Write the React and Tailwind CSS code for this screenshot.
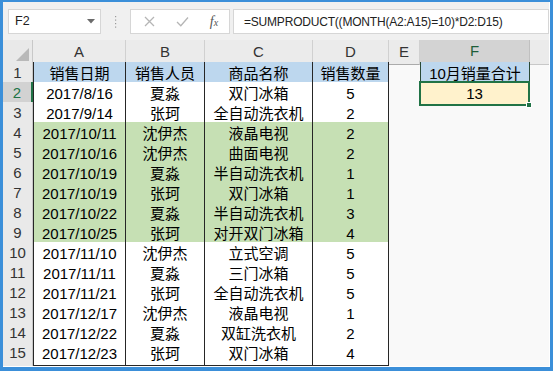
import React from "react";

const rows = [
  ["2017/8/16", "夏淼", "双门冰箱", "5", "w"],
  ["2017/9/14", "张珂", "全自动洗衣机", "2", "w"],
  ["2017/10/11", "沈伊杰", "液晶电视", "2", "g"],
  ["2017/10/16", "沈伊杰", "曲面电视", "2", "g"],
  ["2017/10/19", "夏淼", "半自动洗衣机", "1", "g"],
  ["2017/10/19", "张珂", "双门冰箱", "1", "g"],
  ["2017/10/22", "夏淼", "半自动洗衣机", "3", "g"],
  ["2017/10/25", "张珂", "对开双门冰箱", "4", "g"],
  ["2017/11/10", "沈伊杰", "立式空调", "5", "w"],
  ["2017/11/11", "夏淼", "三门冰箱", "5", "w"],
  ["2017/11/21", "张珂", "全自动洗衣机", "5", "w"],
  ["2017/12/17", "沈伊杰", "液晶电视", "1", "w"],
  ["2017/12/22", "夏淼", "双缸洗衣机", "2", "w"],
  ["2017/12/23", "张珂", "双门冰箱", "4", "w"],
];

const GRID = "grid grid-cols-[30px_93px_79px_108px_76px_31px_110px_1fr]";
const FONT = "font-['Liberation_Sans','Noto_Sans_CJK_SC',sans-serif]";

function RowNum({ n, active }) {
  return (
    <div
      className={
        "flex items-center justify-center text-[15px] border-b border-[#d4d4d4] " +
        (active
          ? "bg-[#d2d2d2] text-[#217346] border-r-2 border-r-[#217346]"
          : "bg-[#e9e9e9] text-[#333] border-r border-r-[#c8c8c8]")
      }
    >
      {n}
    </div>
  );
}

function DCell({ children, bg, first }) {
  return (
    <div
      className={
        "flex items-center justify-center text-[15px] text-black leading-none border-r border-b border-[#262626] " +
        bg +
        (first ? " border-l" : "")
      }
    >
      {children}
    </div>
  );
}

export default function App() {
  return (
    <div className={"w-[553px] h-[371px] bg-[#3b8fd9] pt-[2px] pl-[3px] pr-[3px] pb-[4px] " + FONT}>
      <div className="w-full h-full bg-[#f9f9f9] flex flex-col overflow-hidden border-r border-b border-white">
        {/* toolbar */}
        <div className="h-[38px] shrink-0 bg-[#f0f0f0] flex items-start pt-[7px]">
          <div className="ml-[5px] w-[93px] h-[25px] bg-white border border-[#d6d6d6] flex items-center justify-between pl-[6px] pr-[5px]">
            <span className="text-[12.5px] text-[#222] font-['Liberation_Sans',sans-serif]">F2</span>
            <svg width="8" height="5" viewBox="0 0 8 5">
              <path d="M0 0 L8 0 L4 4.5 Z" fill="#6b6b6b" />
            </svg>
          </div>
          <div className="w-[29px] h-[25px] flex items-center justify-center">
            <svg width="3" height="12" viewBox="0 0 3 12">
              <rect x="1" y="0" width="1.2" height="1.2" fill="#9a9a9a" />
              <rect x="1" y="3.5" width="1.2" height="1.2" fill="#9a9a9a" />
              <rect x="1" y="7" width="1.2" height="1.2" fill="#9a9a9a" />
              <rect x="1" y="10.5" width="1.2" height="1.2" fill="#9a9a9a" />
            </svg>
          </div>
          <div className="w-[100px] h-[25px] bg-white border border-[#d6d6d6] flex items-center">
            <div className="w-[34px] flex justify-center pl-[2px]">
              <svg width="11" height="11" viewBox="0 0 11 11">
                <path d="M1 1 L10 10 M10 1 L1 10" stroke="#b5b5b5" strokeWidth="1.3" />
              </svg>
            </div>
            <div className="w-[34px] flex justify-center">
              <svg width="13" height="11" viewBox="0 0 13 11">
                <path d="M1 6 L4.8 9.8 L12 1.5" stroke="#b5b5b5" strokeWidth="1.3" fill="none" />
              </svg>
            </div>
            <div className="w-[30px] flex justify-center">
              <span className="font-['Liberation_Serif',serif] italic text-[14px] text-[#555] leading-none">
                f<span className="text-[10px]">x</span>
              </span>
            </div>
          </div>
          <div className="ml-[3px] w-[316px] h-[25px] bg-white border border-[#d6d6d6] flex items-center pl-[10px]">
            <span className="text-[12px] tracking-[-0.2px] text-[#222] font-['Liberation_Sans',sans-serif]">
              =SUMPRODUCT((MONTH(A2:A15)=10)*D2:D15)
            </span>
          </div>
        </div>

        {/* column headers */}
        <div className={GRID + " h-[22px] shrink-0"}>
          <div className="bg-[#e9e9e9] border-r border-b border-[#c8c8c8] flex items-end justify-end pr-[3px] pb-[3px]">
            <svg width="13" height="13" viewBox="0 0 13 13">
              <path d="M13 0 L13 13 L0 13 Z" fill="#b9b9b9" />
            </svg>
          </div>
          {["A", "B", "C", "D", "E"].map((c) => (
            <div
              key={c}
              className="bg-[#ebebeb] border-r border-b border-r-[#d0d0d0] border-b-[#ababab] flex items-center justify-center text-[15px] text-[#333]"
            >
              {c}
            </div>
          ))}
          <div className="bg-[#d3d3d3] border-r border-r-[#c0c0c0] border-b-2 border-b-[#217346] flex items-center justify-center text-[15px] text-[#1d5e39]">
            F
          </div>
          <div className="bg-[#ebebeb] border-b border-b-[#c8c8c8]" />
        </div>

        {/* row 1 */}
        <div className={GRID + " h-[20px] shrink-0"}>
          <RowNum n={1} />
          <DCell bg="bg-[#bdd7ee]" first>销售日期</DCell>
          <DCell bg="bg-[#bdd7ee]">销售人员</DCell>
          <DCell bg="bg-[#bdd7ee]">商品名称</DCell>
          <DCell bg="bg-[#bdd7ee]">销售数量</DCell>
          <div />
          <div className="bg-[#bdd7ee] border-l border-r border-[#2a4a36] flex items-center justify-center text-[15px] text-black leading-none">
            10月销量合计
          </div>
          <div />
        </div>

        {rows.map((r, i) => {
          const bg = r[4] === "g" ? "bg-[#c6e0b4]" : "bg-white";
          const n = i + 2;
          return (
            <div key={i} className={GRID + " h-[20px] shrink-0"}>
              <RowNum n={n} active={n === 2} />
              <DCell bg={bg} first>{r[0]}</DCell>
              <DCell bg={bg}>{r[1]}</DCell>
              <DCell bg={bg}>{r[2]}</DCell>
              <DCell bg={bg}>{r[3]}</DCell>
              <div />
              {n === 2 ? (
                <div className="relative bg-[#fff2cc] border-2 border-[#217346] -mt-px -ml-px flex items-center justify-center text-[15px] text-black leading-none">
                  13
                  <div className="absolute right-[-4px] bottom-[-4px] w-[6px] h-[6px] bg-[#217346] border border-white" />
                </div>
              ) : (
                <div />
              )}
              <div />
            </div>
          );
        })}

        <div className={GRID + " flex-1"}>
          <div className="bg-[#e9e9e9] border-r border-[#c8c8c8]" />
        </div>
      </div>
    </div>
  );
}
